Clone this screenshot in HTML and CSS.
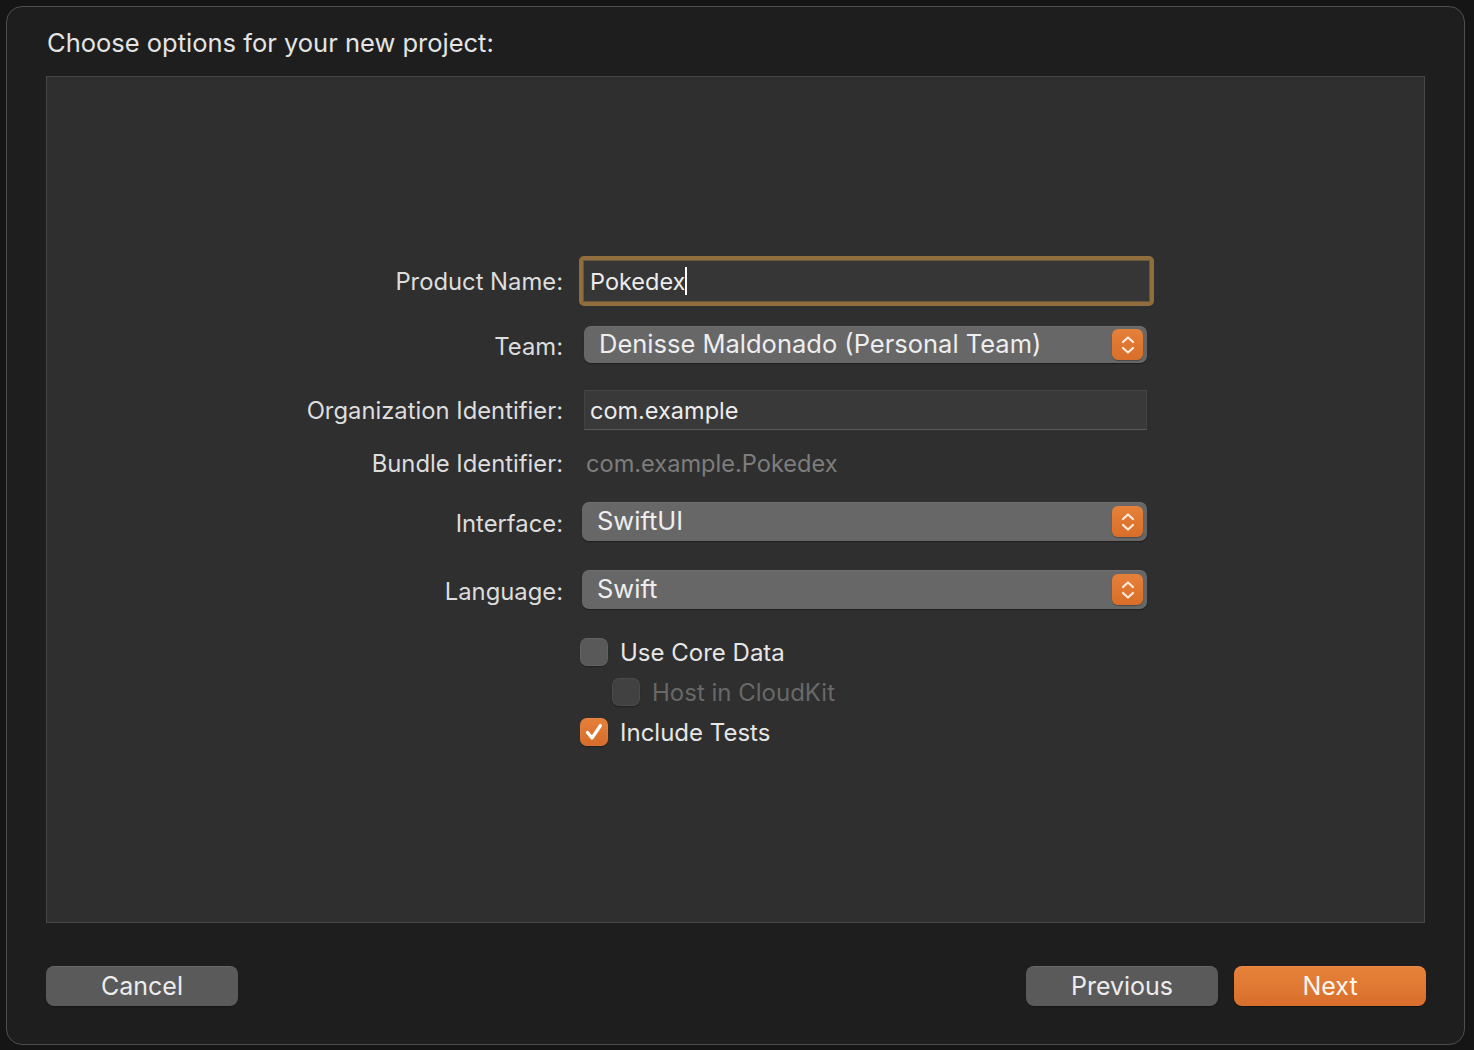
FILE: index.html
```html
<!DOCTYPE html>
<html>
<head>
<meta charset="utf-8">
<link rel="stylesheet" href="styles.css">
</head>
<body>
<div class="window">
  <div class="title">Choose options for your new project:</div>
  <div class="panel">
    <div class="form">
      <div class="row r-name">
        <div class="label">Product Name:</div>
        <div class="ctrl">
          <div class="focus-ring"><div class="field field-focus"><span>Pokedex</span><span class="caret"></span></div></div>
        </div>
      </div>
      <div class="row r-team">
        <div class="label lower">Team:</div>
        <div class="ctrl">
          <div class="popup popup-team"><span class="popup-text">Denisse Maldonado (Personal Team)</span>
            <span class="stepper"><svg width="18" height="22" viewBox="0 0 18 22"><path d="M4 8 L9 3.5 L14 8" /><path d="M4 14 L9 18.5 L14 14" /></svg></span>
          </div>
        </div>
      </div>
      <div class="row r-org">
        <div class="label">Organization Identifier:</div>
        <div class="ctrl">
          <div class="field field-org">com.example</div>
        </div>
      </div>
      <div class="row r-bundle">
        <div class="label">Bundle Identifier:</div>
        <div class="ctrl">
          <div class="bundle">com.example.Pokedex</div>
        </div>
      </div>
      <div class="row r-iface">
        <div class="label lower">Interface:</div>
        <div class="ctrl">
          <div class="popup popup-wide"><span class="popup-text">SwiftUI</span>
            <span class="stepper"><svg width="18" height="22" viewBox="0 0 18 22"><path d="M4 8 L9 3.5 L14 8" /><path d="M4 14 L9 18.5 L14 14" /></svg></span>
          </div>
        </div>
      </div>
      <div class="row r-lang">
        <div class="label lower">Language:</div>
        <div class="ctrl">
          <div class="popup popup-wide"><span class="popup-text">Swift</span>
            <span class="stepper"><svg width="18" height="22" viewBox="0 0 18 22"><path d="M4 8 L9 3.5 L14 8" /><path d="M4 14 L9 18.5 L14 14" /></svg></span>
          </div>
        </div>
      </div>
      <div class="row r-check1">
        <div class="label"></div>
        <div class="ctrl">
          <div class="check"><span class="box"></span><span class="check-text">Use Core Data</span></div>
        </div>
      </div>
      <div class="row r-check2">
        <div class="label"></div>
        <div class="ctrl">
          <div class="check indent disabled"><span class="box"></span><span class="check-text">Host in CloudKit</span></div>
        </div>
      </div>
      <div class="row r-check3">
        <div class="label"></div>
        <div class="ctrl">
          <div class="check"><span class="box checked"><svg width="28" height="28" viewBox="0 0 28 28"><path d="M7.5 14.5 L12 20 L20.5 7.5" /></svg></span><span class="check-text">Include Tests</span></div>
        </div>
      </div>
    </div>
  </div>
  <div class="buttons">
    <div class="btn">Cancel</div>
    <div class="btn-group">
      <div class="btn">Previous</div>
      <div class="btn btn-primary">Next</div>
    </div>
  </div>
</div>
</body>
</html>
```
FILE: styles.css
```css
html, body {
  margin: 0;
  padding: 0;
  background: #151515;
  width: 1474px;
  height: 1050px;
  overflow: hidden;
}
body {
  font-family: Inter, "Noto Sans", sans-serif;
  color: #e2e2e2;
}
.window {
  margin: 6px 0 0 6px;
  width: 1459px;
  height: 1039px;
  box-sizing: border-box;
  background: #1e1e1e;
  border: 1px solid #4e4e4e;
  border-radius: 16px;
  padding: 0 39px 0 39px;
  display: flex;
  flex-direction: column;
}
.title {
  font-size: 25.5px;
  line-height: 30px;
  margin-top: 21px;
  margin-left: 1px;
  height: 48px;
  color: #e4e4e4;
}
.panel {
  height: 847px;
  box-sizing: border-box;
  background: #2f2f2f;
  border: 1px solid #474747;
  padding-top: 179px;
}
.form {
  display: flex;
  flex-direction: column;
}
.row {
  display: flex;
  align-items: center;
}
.label {
  width: 516px;
  text-align: right;
  font-size: 23.8px;
  color: #dddddd;
  flex: none;
}
.label.lower { position: relative; top: 2px; }
.ctrl {
  margin-left: 16px;
  width: 580px;
  height: 100%;
  display: flex;
  align-items: center;
}
.r-name { height: 50px; }
.r-team { height: 37px; margin-top: 20px; }
.r-org { height: 40px; margin-top: 27px; }
.r-bundle { height: 26px; margin-top: 20px; }
.r-iface { height: 39px; margin-top: 26px; }
.r-lang { height: 39px; margin-top: 29px; }
.r-check1 { height: 28px; margin-top: 29px; }
.r-check2 { height: 28px; margin-top: 12px; }
.r-check3 { height: 28px; margin-top: 12px; }

.focus-ring {
  width: 575px;
  height: 50px;
  box-sizing: border-box;
  border: 4px solid #8f6d3c;
  border-radius: 5px;
}
.field-focus {
  height: 100%;
  box-sizing: border-box;
  background: #363636;
  border: 1px solid #6a5638;
  display: flex;
  align-items: center;
  padding-left: 6px;
  font-size: 23.5px;
  color: #ececec;
}
.caret {
  display: inline-block;
  width: 2px;
  height: 28px;
  background: #ffffff;
}
.field-org {
  width: 563px;
  height: 40px;
  box-sizing: border-box;
  margin-left: 5px;
  background: #393939;
  border-top: 1px solid #464646;
  border-left: 1px solid #434343;
  border-right: 1px solid #434343;
  border-bottom: 1px solid #5a5a5a;
  display: flex;
  align-items: center;
  padding-left: 5px;
  font-size: 23.5px;
  color: #ededed;
}
.bundle {
  margin-left: 7px;
  font-size: 23.6px;
  color: #7d7d7d;
}
.popup {
  height: 100%;
  box-sizing: border-box;
  background: #676767;
  border-radius: 7px;
  box-shadow: 0 1px 1px rgba(0,0,0,0.35), inset 0 1px 0 rgba(255,255,255,0.06);
  display: flex;
  align-items: center;
  justify-content: space-between;
}
.popup-team {
  width: 563px;
  margin-left: 5px;
  padding: 0 4px 0 15px;
}
.popup-wide {
  width: 565px;
  margin-left: 3px;
  padding: 0 4px 0 15px;
}
.popup-text {
  font-size: 25.5px;
  color: #eeeeee;
  position: relative;
  top: -1px;
}
.stepper {
  width: 31px;
  height: 31px;
  border-radius: 6px;
  background: linear-gradient(#e5803a, #d86e2a);
  display: flex;
  align-items: center;
  justify-content: center;
  box-shadow: 0 1px 1px rgba(0,0,0,0.3);
}
.stepper svg path {
  fill: none;
  stroke: #fbe9dc;
  stroke-width: 2.2;
  stroke-linecap: round;
  stroke-linejoin: round;
}
.check {
  display: flex;
  align-items: center;
  margin-left: 1px;
}
.check.indent { margin-left: 33px; }
.box {
  width: 28px;
  height: 28px;
  box-sizing: border-box;
  border-radius: 7px;
  background: #595959;
  box-shadow: inset 0 0 0 1px rgba(255,255,255,0.05), 0 1px 1px rgba(0,0,0,0.3);
  display: flex;
  flex: none;
}
.disabled .box { background: #414141; }
.box.checked { background: linear-gradient(#e5803a, #d66c2a); }
.box.checked path {
  fill: none;
  stroke: #ffffff;
  stroke-width: 3.2;
  stroke-linecap: round;
  stroke-linejoin: round;
}
.check-text {
  margin-left: 12px;
  font-size: 24px;
  color: #e6e6e6;
}
.disabled .check-text { color: #686868; }

.buttons {
  margin-top: 43px;
  display: flex;
  justify-content: space-between;
}
.btn-group {
  display: flex;
  gap: 16px;
  margin-right: -1px;
}
.btn {
  width: 192px;
  height: 40px;
  box-sizing: border-box;
  background: #5a5a5a;
  border-radius: 8px;
  box-shadow: inset 0 1px 0 rgba(255,255,255,0.08), 0 1px 1px rgba(0,0,0,0.3);
  display: flex;
  align-items: center;
  justify-content: center;
  font-size: 25px;
  color: #ececec;
}
.btn-primary {
  background: linear-gradient(#e6823a, #d86f2c);
  color: #fff6ef;
}
```
